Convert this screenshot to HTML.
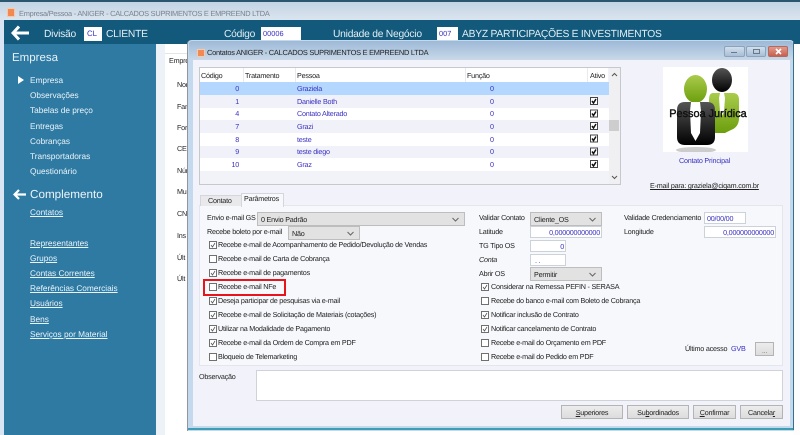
<!DOCTYPE html>
<html><head><meta charset="utf-8"><style>
html,body{margin:0;padding:0;background:#fff}
#r{position:relative;width:800px;height:435px;overflow:hidden;background:#fff;font:7.2px/12px "Liberation Sans",sans-serif;letter-spacing:-.22px;color:#222;filter:blur(.3px);text-rendering:geometricPrecision}
#r div,#r svg{position:absolute}
.t{white-space:nowrap;height:12px;margin-top:1px}
.s{color:#eaf3f8;font-size:8.3px;left:30px;letter-spacing:-.02px}
.h{color:#e2edf3;font-size:10.3px;letter-spacing:-.25px;line-height:14px;height:14px}
.s u{text-decoration-thickness:1px}
.b{color:#3a30c0}
.n{text-align:right;width:20px;left:219px}
.in{background:#fff;border:1px solid #ccd2da;box-sizing:border-box;color:#3a30c0;text-align:right;padding-right:1px;line-height:12px}
.sel{background:#e2e2e2;border:1px solid #bdbdbd;box-sizing:border-box;padding-left:3px;line-height:14px;color:#222}
.sel svg{right:5px;top:4px}
.btn{background:linear-gradient(#ececec,#dcdcdc);border:1px solid #b4b4b4;box-sizing:border-box;text-align:center;line-height:13px;color:#222}
.row{left:200px;width:409px;height:13px}
</style></head><body><div id="r">
<!-- outer window -->
<div style="left:0;top:0;width:800px;height:2px;background:#2a566f"></div>
<div style="left:0;top:2px;width:800px;height:18px;background:linear-gradient(#c3d4e4,#dbe5ef)"></div>
<div style="left:0;top:20px;width:4px;height:415px;background:#d9e5f2"></div>
<div style="left:4px;top:20px;width:796px;height:24px;background:#12597b"></div>
<div style="left:4px;top:44px;width:152px;height:391px;background:#2e7aa3"></div>
<div style="left:156px;top:44px;width:9px;height:391px;background:#edf1f8"></div>
<div style="left:793px;top:44px;width:7px;height:391px;background:#fdfdfe"></div>
<div style="left:7px;top:8px;width:6px;height:7px;background:#f2894f;border:1px solid #f4c9ae"></div>
<div class="t" style="left:19px;top:7px;color:#76838f;font-size:7.4px;letter-spacing:-.24px">Empresa/Pessoa - ANIGER - CALCADOS SUPRIMENTOS E EMPREEND LTDA</div>
<svg style="left:11px;top:25px" width="18" height="16" viewBox="0 0 18 16"><path d="M8 1.500 2 8l6 6.500M2 8h16" fill="none" stroke="#fff" stroke-width="3"/></svg>
<div class="t h" style="left:44px;top:27px">Divisão</div>
<div style="left:84px;top:27px;width:18px;height:14px;background:#fff"></div>
<div class="t b" style="left:87px;top:27px;font-size:7.8px;letter-spacing:0">CL</div>
<div class="t h" style="left:106px;top:27px">CLIENTE</div>
<div class="t h" style="left:224px;top:27px">Código</div>
<div style="left:261px;top:27px;width:40px;height:14px;background:#fff"></div>
<div class="t b" style="left:263px;top:27px;font-size:7.4px;letter-spacing:0">00006</div>
<div class="t h" style="left:333px;top:27px">Unidade de Negócio</div>
<div style="left:437px;top:27px;width:21px;height:14px;background:#fff"></div>
<div class="t b" style="left:439px;top:27px;font-size:7.4px;letter-spacing:0">007</div>
<div class="t h" style="left:462px;top:27px">ABYZ PARTICIPAÇÕES E INVESTIMENTOS</div>
<!-- sidebar -->
<div class="t" style="left:12px;top:50px;color:#e8f1f6;font-size:11.5px;letter-spacing:0;line-height:15px;height:15px">Empresa</div>
<svg style="left:18px;top:76px" width="6" height="8"><path d="M0 0 6 4 0 8z" fill="#fff"/></svg>
<div class="t s" style="top:73px">Empresa</div>
<div class="t s" style="top:88px">Observações</div>
<div class="t s" style="top:103px">Tabelas de preço</div>
<div class="t s" style="top:119px">Entregas</div>
<div class="t s" style="top:134px">Cobranças</div>
<div class="t s" style="top:149px">Transportadoras</div>
<div class="t s" style="top:164px">Questionário</div>
<svg style="left:13px;top:189px" width="13" height="11" viewBox="0 0 13 11"><path d="M6 1 1.500 5.500 6 10M2 5.500h11" fill="none" stroke="#fff" stroke-width="2.200"/></svg>
<div class="t" style="left:30px;top:186px;color:#eef5f9;font-size:11.7px;letter-spacing:0;line-height:15px;height:15px">Complemento</div>
<div class="t s" style="top:205px"><u>Contatos</u></div>
<div class="t s" style="top:236px"><u>Representantes</u></div>
<div class="t s" style="top:251px"><u>Grupos</u></div>
<div class="t s" style="top:266px"><u>Contas Correntes</u></div>
<div class="t s" style="top:281px"><u>Referências Comerciais</u></div>
<div class="t s" style="top:296px"><u>Usuários</u></div>
<div class="t s" style="top:312px"><u>Bens</u></div>
<div class="t s" style="top:327px"><u>Serviços por Material</u></div>
<!-- background form -->
<div style="left:165px;top:54px;width:23px;height:381px;background:#fff"></div>
<div style="left:165px;top:53px;width:23px;height:1px;background:#e2e5ea"></div>
<div class="t" style="left:169px;top:54px">Empre</div>
<div class="t" style="left:177px;top:78px">Nor</div>
<div class="t" style="left:177px;top:100px">Fan</div>
<div class="t" style="left:177px;top:121px">For</div>
<div class="t" style="left:177px;top:142px">CEF</div>
<div class="t" style="left:177px;top:164px">Nún</div>
<div class="t" style="left:177px;top:185px">Mur</div>
<div class="t" style="left:177px;top:207px">CNI</div>
<div class="t" style="left:177px;top:229px">Ins</div>
<div class="t" style="left:177px;top:251px">Últ</div>
<div class="t" style="left:177px;top:272px">Últ</div>
<!-- dialog -->
<div style="left:188px;top:40px;width:606px;height:391px;background:#c4d8ee;border-radius:4px 4px 0 0;box-shadow:-1px 0 0 #8f979e"></div>
<div style="left:189px;top:41px;width:604px;height:19px;background:linear-gradient(#9db9d6,#c9d9ea);border-radius:3px 3px 0 0"></div>
<div style="left:188px;top:428px;width:606px;height:2px;background:#3e9eb4"></div>
<div style="left:793px;top:41px;width:1px;height:389px;background:#38708c"></div>
<div style="left:193px;top:60px;width:597px;height:366px;background:#f2f3fa"></div>
<div style="left:197px;top:49px;width:6px;height:6px;background:#f2894f;border:1px solid #f4c9ae"></div>
<div class="t" style="left:207px;top:46px;color:#222;font-size:7.4px;letter-spacing:-.24px">Contatos ANIGER - CALCADOS SUPRIMENTOS E EMPREEND LTDA</div>
<div style="left:724px;top:46px;width:21px;height:11px;background:linear-gradient(#d2dfec,#a8bfd6);border:1px solid #8ba3bb;box-sizing:border-box;border-radius:2px"></div>
<div style="left:731px;top:52px;width:6px;height:1px;background:#66788a"></div>
<div style="left:746px;top:46px;width:20px;height:11px;background:linear-gradient(#d2dfec,#a8bfd6);border:1px solid #8ba3bb;box-sizing:border-box;border-radius:2px"></div>
<div style="left:753px;top:49px;width:5px;height:3px;border:1px solid #66788a"></div>
<div style="left:768px;top:46px;width:20px;height:11px;background:linear-gradient(#e29a8e,#c8604f);border:1px solid #b06a5e;box-sizing:border-box;border-radius:2px"></div>
<svg style="left:775px;top:48px" width="7" height="7"><path d="M1 1 6 6M6 1 1 6" stroke="#fff" stroke-width="1.600"/></svg>
<!-- grid -->
<div style="left:199px;top:67px;width:422px;height:118px;background:#f2f3f8;border:1px solid #c6c8cc;box-sizing:border-box"></div>
<div style="left:200px;top:68px;width:408px;height:14px;background:#fff"></div>
<div style="left:243px;top:68px;width:1px;height:14px;background:#e8eaee"></div>
<div style="left:295px;top:68px;width:1px;height:14px;background:#e8eaee"></div>
<div style="left:465px;top:68px;width:1px;height:14px;background:#e8eaee"></div>
<div style="left:587px;top:68px;width:1px;height:14px;background:#e8eaee"></div>
<div class="t" style="left:201px;top:69px">Código</div>
<div class="t" style="left:245px;top:69px">Tratamento</div>
<div class="t" style="left:297px;top:69px">Pessoa</div>
<div class="t" style="left:467px;top:69px">Função</div>
<div class="t" style="left:590px;top:69px">Ativo</div>
<div class="row" style="top:82px;background:#b3d7fe"></div>
<div class="row" style="top:95px;background:#f1f2f9"></div>
<div class="row" style="top:108px;background:#fff"></div>
<div class="row" style="top:120px;background:#f1f2f9"></div>
<div class="row" style="top:133px;background:#fff"></div>
<div class="row" style="top:146px;background:#f1f2f9"></div>
<div class="row" style="top:158px;background:#fff"></div>
<div class="t b n" style="top:82px">0</div><div class="t b" style="left:297px;top:82px">Graziela</div><div class="t b" style="left:490px;top:82px">0</div>
<div class="t b n" style="top:95px">1</div><div class="t b" style="left:297px;top:95px">Danielle Both</div><div class="t b" style="left:490px;top:95px">0</div>
<div class="t b n" style="top:107px">4</div><div class="t b" style="left:297px;top:107px">Contato Alterado</div><div class="t b" style="left:490px;top:107px">0</div>
<div class="t b n" style="top:120px">7</div><div class="t b" style="left:297px;top:120px">Grazi</div><div class="t b" style="left:490px;top:120px">0</div>
<div class="t b n" style="top:133px">8</div><div class="t b" style="left:297px;top:133px">teste</div><div class="t b" style="left:490px;top:133px">0</div>
<div class="t b n" style="top:145px">9</div><div class="t b" style="left:297px;top:145px">teste diego</div><div class="t b" style="left:490px;top:145px">0</div>
<div class="t b n" style="top:158px">10</div><div class="t b" style="left:297px;top:158px">Graz</div><div class="t b" style="left:490px;top:158px">0</div>
<svg style="left:590px;top:97px" width="8" height="80" viewBox="0 0 8 80"><g fill="#fff" stroke="#444"><rect x=".5" y=".5" width="7" height="7"/><rect x=".5" y="13" width="7" height="7"/><rect x=".5" y="25.500" width="7" height="7"/><rect x=".5" y="38" width="7" height="7"/><rect x=".5" y="51" width="7" height="7"/><rect x=".5" y="63.500" width="7" height="7"/></g><g fill="none" stroke="#111" stroke-width="1.500"><path d="m2 4 1.500 2L6 2M2 16.500l1.500 2 2.500-4M2 29l1.500 2 2.500-4M2 41.500l1.500 2 2.500-4M2 54.500l1.500 2 2.500-4M2 67l1.500 2 2.500-4"/></g></svg>
<div style="left:609px;top:68px;width:11px;height:116px;background:#f0f0f2"></div>
<div style="left:609px;top:120px;width:10px;height:11px;background:#cdcdcd"></div>
<svg style="left:611px;top:72px" width="7" height="108"><path d="M1 4 3.500 1.500 6 4M1 104l2.500 2.500L6 104" fill="none" stroke="#555"/></svg>
<!-- picture -->
<div style="left:663px;top:67px;width:85px;height:85px;background:#fff"></div>
<svg style="left:663px;top:67px" width="85" height="85" viewBox="0 0 85 85">
<defs><linearGradient id="g" x1="0" y1="0" x2="0" y2="1"><stop offset="0" stop-color="#aacb4c"/><stop offset="1" stop-color="#6b9e0c"/></linearGradient><linearGradient id="k" x1="0" y1="0" x2="0" y2="1"><stop offset="0" stop-color="#555"/><stop offset="1" stop-color="#000"/></linearGradient></defs>
<ellipse cx="59" cy="13" rx="10" ry="12" fill="url(#k)"/>
<path d="M50 26h20q6 0 6 7v18q0 9-8 12l-6 3H46V33q0-7 4-7z" fill="url(#g)"/>
<path d="M57 26h4l1 5-1 14-2 4-2-4-1-14z" fill="#fff"/>
<ellipse cx="32.500" cy="22" rx="11.500" ry="14" fill="url(#g)"/>
<path d="M22 35h22q8 0 8 8v27q0 8-8 8H22q-8 0-8-8V43q0-8 8-8z" fill="url(#k)"/>
<path d="M28 35h9l1 9-1 22-4.500 8-4.500-8-1-22z" fill="#fff"/>
<ellipse cx="33" cy="83" rx="20" ry="3" fill="#ccc"/>
<text x="45" y="50" text-anchor="middle" font-family="Liberation Sans" font-size="10.900" letter-spacing="0" fill="#111" stroke="#111" stroke-width=".4">Pessoa Jurídica</text>
</svg>
<div class="t b" style="left:679px;top:154px">Contato Principal</div>
<div class="t" style="left:650px;top:179px;color:#222"><u>E-mail para: graziela@ciqam.com.br</u></div>
<!-- tabs -->
<div style="left:199px;top:205px;width:584px;height:161px;background:#f7f8fc;border:1px solid #e4e6ee;box-sizing:border-box"></div>
<div style="left:200px;top:195px;width:41px;height:10px;background:#e9e9ec;border:1px solid #d5d6dc;border-bottom:0"></div>
<div class="t" style="left:208px;top:194px">Contato</div>
<div style="left:241px;top:193px;width:41px;height:13px;background:#f7f8fc;border:1px solid #d5d6dc;border-bottom:0"></div>
<div class="t" style="left:244px;top:192px">Parâmetros</div>
<!-- left fields -->
<div class="t" style="left:207px;top:211px">Envio e-mail GS</div>
<div class="sel" style="left:257px;top:212px;width:208px;height:14px">0 Envio Padrão<svg width="7" height="5"><path d="M.5 1 3.500 4l3-3" fill="none" stroke="#666"/></svg></div>
<div class="t" style="left:207px;top:225px">Recebe boleto por e-mail</div>
<div class="sel" style="left:288px;top:226px;width:72px;height:14px">Não<svg width="7" height="5"><path d="M.5 1 3.500 4l3-3" fill="none" stroke="#666"/></svg></div>
<svg style="left:209px;top:0" width="8" height="435" viewBox="0 0 8 435" ><g fill="#fff" stroke="#707070"><rect x=".5" y="241.500" width="7" height="7"/><rect x=".5" y="255.500" width="7" height="7"/><rect x=".5" y="269.500" width="7" height="7"/><rect x=".5" y="283.500" width="7" height="7"/><rect x=".5" y="297.500" width="7" height="7"/><rect x=".5" y="311.500" width="7" height="7"/><rect x=".5" y="325.500" width="7" height="7"/><rect x=".5" y="339.500" width="7" height="7"/><rect x=".5" y="353.500" width="7" height="7"/></g><path d="m2 245 1.500 2L6 243M2 273l1.500 2 2.500-4M2 301l1.500 2 2.500-4M2 315l1.500 2 2.500-4M2 329l1.500 2 2.500-4M2 343l1.500 2 2.500-4" fill="none" stroke="#555" stroke-width=".8"/></svg>
<div class="t" style="left:218px;top:238px">Recebe e-mail de Acompanhamento de Pedido/Devolução de Vendas</div>
<div class="t" style="left:218px;top:252px">Recebe e-mail de Carta de Cobrança</div>
<div class="t" style="left:218px;top:266px">Recebe e-mail de pagamentos</div>
<div class="t" style="left:218px;top:280px">Recebe e-mail NFe</div>
<div class="t" style="left:218px;top:294px">Deseja participar de pesquisas via e-mail</div>
<div class="t" style="left:218px;top:308px">Recebe e-mail de Solicitação de Materiais (cotações)</div>
<div class="t" style="left:218px;top:322px">Utilizar na Modalidade de Pagamento</div>
<div class="t" style="left:218px;top:336px">Recebe e-mail da Ordem de Compra em PDF</div>
<div class="t" style="left:218px;top:350px">Bloqueio de Telemarketing</div>
<div style="left:203px;top:279px;width:79px;height:13px;border:2px solid #e8141b"></div>
<!-- right fields -->
<div class="t" style="left:479px;top:211px">Validar Contato</div>
<div class="sel" style="left:530px;top:212px;width:72px;height:14px">Cliente_OS<svg width="7" height="5"><path d="M.5 1 3.500 4l3-3" fill="none" stroke="#666"/></svg></div>
<div class="t" style="left:479px;top:225px">Latitude</div>
<div class="in" style="left:530px;top:226px;width:72px;height:12px">0,000000000000</div>
<div class="t" style="left:479px;top:239px">TG Tipo OS</div>
<div class="in" style="left:530px;top:240px;width:36px;height:12px">0</div>
<div class="t" style="left:479px;top:253px;font-style:italic">Conta</div>
<div class="in" style="left:530px;top:254px;width:36px;height:12px;text-align:left;padding-left:4px">. .</div>
<div class="t" style="left:479px;top:267px">Abrir OS</div>
<div class="sel" style="left:530px;top:267px;width:72px;height:14px">Permitir<svg width="7" height="5"><path d="M.5 1 3.500 4l3-3" fill="none" stroke="#666"/></svg></div>
<div class="t" style="left:624px;top:211px">Validade Credenciamento</div>
<div class="in" style="left:704px;top:212px;width:42px;height:12px;text-align:left;padding-left:2px">00/00/00</div>
<div class="t" style="left:624px;top:225px">Longitude</div>
<div class="in" style="left:704px;top:226px;width:72px;height:12px">0,000000000000</div>
<svg style="left:481px;top:0" width="8" height="435" viewBox="0 0 8 435"><g fill="#fff" stroke="#707070"><rect x=".5" y="283.500" width="7" height="7"/><rect x=".5" y="297.500" width="7" height="7"/><rect x=".5" y="311.500" width="7" height="7"/><rect x=".5" y="325.500" width="7" height="7"/><rect x=".5" y="339.500" width="7" height="7"/><rect x=".5" y="353.500" width="7" height="7"/></g><path d="m2 287 1.500 2L6 285M2 315l1.500 2 2.500-4M2 329l1.500 2 2.500-4" fill="none" stroke="#555" stroke-width=".8"/></svg>
<div class="t" style="left:491px;top:280px">Considerar na Remessa PEFIN - SERASA</div>
<div class="t" style="left:491px;top:294px">Recebe do banco e-mail com Boleto de Cobrança</div>
<div class="t" style="left:491px;top:308px">Notificar inclusão de Contrato</div>
<div class="t" style="left:491px;top:322px">Notificar cancelamento de Contrato</div>
<div class="t" style="left:491px;top:336px">Recebe e-mail do Orçamento em PDF</div>
<div class="t" style="left:491px;top:350px">Recebe e-mail do Pedido em PDF</div>
<div class="t" style="left:685px;top:342px">Último acesso</div>
<div class="t b" style="left:731px;top:342px">GVB</div>
<div class="btn" style="left:755px;top:342px;width:19px;height:14px;line-height:16px;color:#777">...</div>
<!-- bottom -->
<div class="t" style="left:199px;top:370px">Observação</div>
<div style="left:256px;top:370px;width:527px;height:31px;background:#fff;border:1px solid #cfd2d8;box-sizing:border-box"></div>
<div class="btn" style="left:561px;top:405px;width:62px;height:14px"><u>S</u>uperiores</div>
<div class="btn" style="left:627px;top:405px;width:62px;height:14px">Su<u>b</u>ordinados</div>
<div class="btn" style="left:693px;top:405px;width:43px;height:14px"><u>C</u>onfirmar</div>
<div class="btn" style="left:740px;top:405px;width:43px;height:14px">Cancela<u>r</u></div>
</div></body></html>
